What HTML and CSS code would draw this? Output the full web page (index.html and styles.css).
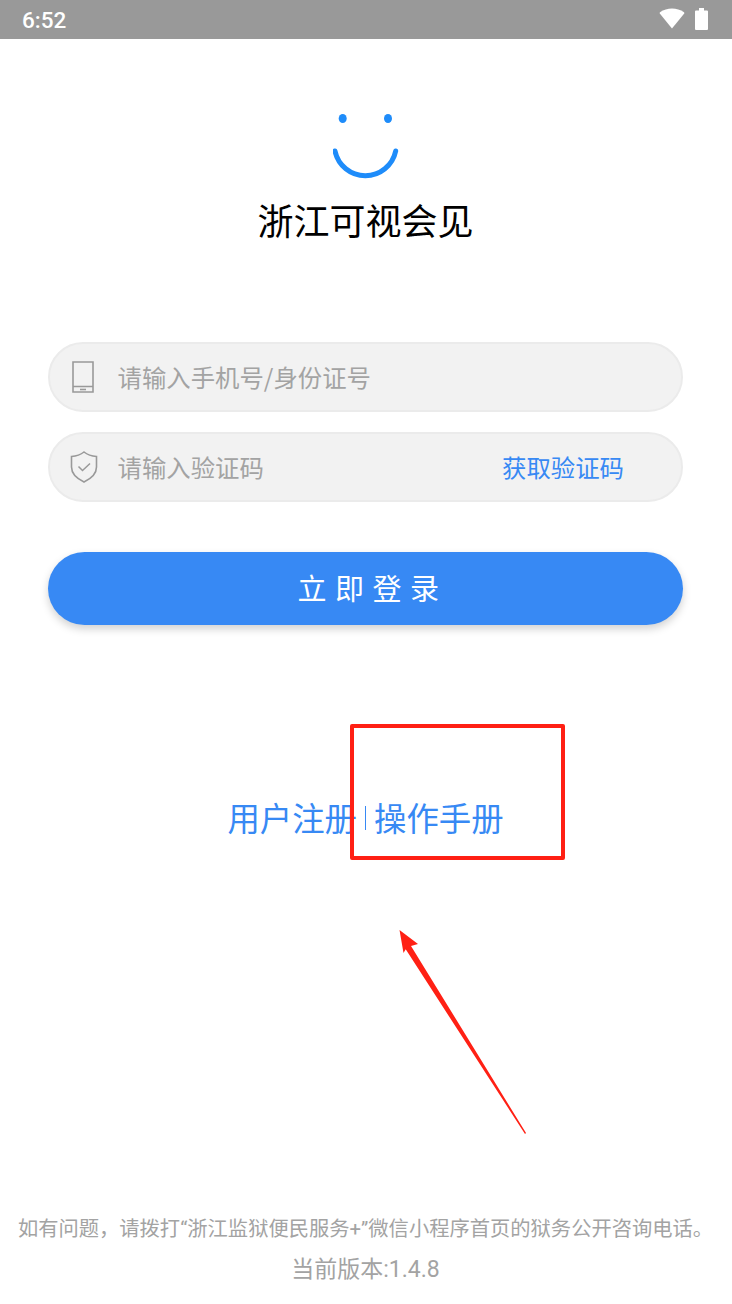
FILE: index.html
```html
<!DOCTYPE html>
<html lang="zh-CN">
<head>
    <meta charset="UTF-8">
    <meta name="viewport" content="width=device-width, initial-scale=1.0">
    <title>浙江可视会见</title>
    <link rel="stylesheet" href="styles.css">
</head>
<body>
    <header class="status-bar">
        <span class="status-time">6:52</span>
        <div class="status-icons">
            <svg class="wifi-icon" width="26" height="21" viewBox="0 0 26 21">
                <path d="M13 20.500 L0.800 5.600 Q0.300 4.900 1 4.300 Q6.500 0.600 13 0.600 Q19.500 0.600 25 4.300 Q25.700 4.900 25.200 5.600 Z" fill="#fff"/>
            </svg>
            <svg class="battery-icon" width="13" height="22" viewBox="0 0 13 22">
                <path d="M4 0 H9 V2.500 H12 Q13 2.500 13 3.500 V21 Q13 22 12 22 H1 Q0 22 0 21 V3.500 Q0 2.500 1 2.500 H4 Z" fill="#fff"/>
            </svg>
        </div>
    </header>

    <main class="login-page">
        <div class="logo">
            <svg width="68" height="70" viewBox="0 0 68 70">
                <ellipse cx="9.700" cy="6.500" rx="4" ry="4.500" fill="#1e8cfa"/>
                <ellipse cx="55" cy="6.500" rx="4" ry="4.500" fill="#1e8cfa"/>
                <path d="M2 39 A31 31 0 0 0 62.700 39" fill="none" stroke="#1e8cfa" stroke-width="5" stroke-linecap="round"/>
            </svg>
        </div>
        <h1 class="app-title">浙江可视会见</h1>

        <form class="login-form">
            <div class="input-row">
                <svg class="input-icon" width="24" height="34" viewBox="0 0 24 34">
                    <path d="M2 2 H22 V32 H2 Z M2 26.500 H22" fill="none" stroke="#999" stroke-width="1.600"/>
                    <path d="M9 29.500 H15" stroke="#999" stroke-width="1.600"/>
                </svg>
                <span class="placeholder">请输入手机号/身份证号</span>
            </div>
            <div class="input-row">
                <svg class="input-icon shield-icon" width="28" height="32" viewBox="0 0 28 32">
                    <path d="M14 1 Q19 5 26.500 5.500 V16 Q26.500 25 14 31 Q1.500 25 1.500 16 V5.500 Q9 5 14 1 Z" fill="none" stroke="#999" stroke-width="1.600"/>
                    <path d="M8.500 15.500 L12.500 19.500 L20 12.500" fill="none" stroke="#999" stroke-width="1.500"/>
                </svg>
                <span class="placeholder">请输入验证码</span>
                <a class="get-code" href="#">获取验证码</a>
            </div>
            <button class="login-btn" type="button">立即登录</button>
        </form>

        <div class="links">
            <a href="#">用户注册</a>
            <span class="links-sep"></span>
            <a href="#">操作手册</a>
        </div>

        <footer class="page-footer">
            <p class="help-text">如有问题，请拨打“浙江监狱便民服务+”微信小程序首页的狱务公开咨询电话。</p>
            <p class="version">当前版本:1.4.8</p>
        </footer>
    </main>

    <!-- red annotation drawn over the screenshot -->
    <div class="mark-box"></div>
    <svg class="mark-arrow" width="140" height="215" viewBox="0 0 140 215">
        <path d="M0.500 1 L19 15 L12 17 L127 204 L126 205 L6.700 20.300 L4.500 24 Z" fill="#ff2014"/>
    </svg>
</body>
</html>
```

FILE: styles.css
```css
* {
    box-sizing: border-box;
}

html, body {
    height: 100%;
}

body {
    margin: 0;
    background-color: #fff;
    font-family: "Noto Sans CJK SC", "Liberation Sans", sans-serif;
    position: relative;
    overflow: hidden;
}

.status-bar {
    height: 39px;
    background-color: #999;
    color: #fff;
    display: flex;
    justify-content: space-between;
    align-items: center;
    padding: 0 24px 0 22px;
}

.status-time {
    font-family: Roboto, sans-serif;
    font-size: 22.500px;
    font-weight: 500;
}

.status-icons {
    display: flex;
    align-items: center;
    gap: 10px;
    margin-top: -2px;
}

.login-page {
    height: 1265px;
    display: flex;
    flex-direction: column;
    align-items: center;
    padding: 73px 49px 0 48px;
}

.logo {
    height: 70px;
    margin-left: 3px;
}

.logo svg {
    display: block;
}

.app-title {
    margin: 12px 0 0;
    font-size: 36px;
    font-weight: 400;
    line-height: 50px;
    color: #000;
}

.login-form {
    width: 100%;
    margin-top: 98px;
    display: flex;
    flex-direction: column;
    gap: 20px;
}

.input-row {
    height: 70px;
    display: flex;
    align-items: center;
    background-color: #f2f2f2;
    border: 2px solid #ebebeb;
    border-radius: 35px;
    padding: 0 57px 0 0;
    position: relative;
}

.input-icon {
    flex: none;
    margin-left: 21px;
}

.shield-icon {
    margin-left: 20px;
}

.input-row .placeholder {
    position: absolute;
    left: 67.500px;
    margin-bottom: 2px;
    font-size: 24.400px;
    color: #a3a3a3;
}

.get-code {
    margin-left: auto;
    margin-bottom: 2px;
    font-size: 24.400px;
    color: #3789f4;
    text-decoration: none;
}

.login-btn {
    height: 73px;
    margin-top: 30px;
    padding: 0 0 3px 14px;
    border: none;
    border-radius: 37px;
    background-color: #3789f4;
    color: #fff;
    font-family: inherit;
    font-size: 29px;
    letter-spacing: 8.500px;
    box-shadow: 0 4px 8px rgba(0, 0, 0, 0.18);
}

.links {
    margin-top: 164px;
    display: flex;
    align-items: center;
    justify-content: center;
}

.links a {
    font-size: 32.400px;
    line-height: 56px;
    color: #3789f4;
    text-decoration: none;
}

.links-sep {
    width: 1px;
    height: 24px;
    margin: 2px 8px 0 8px;
    background-color: #3789f4;
}

.page-footer {
    margin-top: auto;
    padding-bottom: 18px;
    text-align: center;
    color: #a3a3a3;
    white-space: nowrap;
    font-family: Roboto, "Noto Sans CJK SC", sans-serif;
}

.help-text {
    margin: 0;
    font-size: 20.300px;
    line-height: 30px;
}

.version {
    margin: 10px 0 0;
    font-size: 23px;
    line-height: 32px;
}

.mark-box {
    position: absolute;
    left: 350px;
    top: 724px;
    width: 215px;
    height: 136px;
    border: 4px solid #ff2014;
    border-radius: 2px;
}

.mark-arrow {
    position: absolute;
    left: 399px;
    top: 929px;
}
```
